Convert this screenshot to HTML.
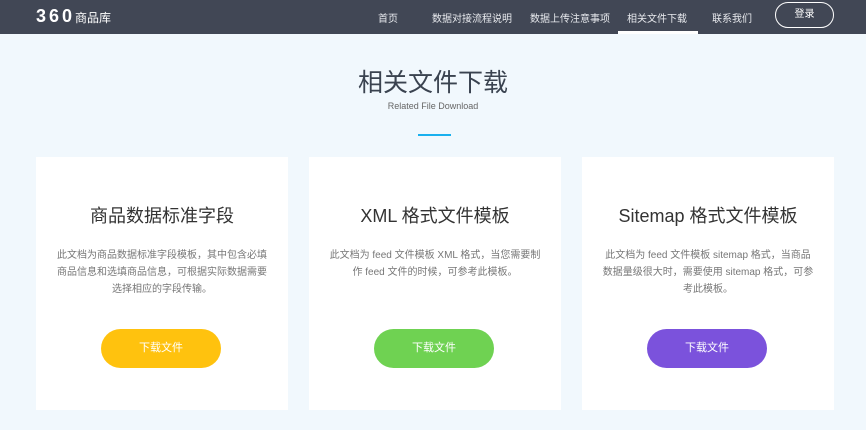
<!DOCTYPE html>
<html><head><meta charset="utf-8"><style>
*{margin:0;padding:0;box-sizing:border-box}
body{width:866px;height:430px;overflow:hidden;background:#f1f8fd;font-family:"Liberation Sans","Noto Sans CJK SC",sans-serif;position:relative}
.hd{position:absolute;left:0;top:0;width:866px;height:34px;background:#414755;color:#fff}
.logo{position:absolute;left:36px;top:6px;font-size:18px;font-weight:bold;letter-spacing:3px}
.logo span{font-size:12px;font-weight:normal;letter-spacing:0}
.nav a{position:absolute;top:10px;font-size:10px;color:#e8eaee;white-space:nowrap}
.ul{position:absolute;left:618px;top:31px;width:80px;height:3px;background:#fff}
.login{position:absolute;left:775px;top:2px;width:59px;height:26px;border:1px solid #fff;border-radius:13px;font-size:10px;color:#fff;text-align:center;line-height:24px}
h1{position:absolute;left:0;width:866px;top:63px;text-align:center;font-size:25px;font-weight:normal;color:#3a4350}
.sub{position:absolute;left:0;width:866px;top:101px;text-align:center;font-size:9px;color:#666}
.bar{position:absolute;left:418px;top:134px;width:33px;height:2px;background:#1ab0ee}
.card{position:absolute;top:157px;width:252px;height:253px;background:#fff;text-align:center}
.card h2{position:absolute;top:45px;left:0;width:100%;font-size:18px;font-weight:normal;color:#333}
.card p{position:absolute;top:90px;left:20px;width:212px;font-size:10px;line-height:17px;color:#777}
.btn{position:absolute;top:172px;left:65px;width:120px;height:39px;border-radius:20px;color:#fff;font-size:11px;line-height:39px}
</style></head><body>
<div class="hd">
<div class="logo">360<span>商品库</span></div>
<div class="nav">
<a style="left:378px">首页</a>
<a style="left:432px">数据对接流程说明</a>
<a style="left:530px">数据上传注意事项</a>
<a style="left:627px">相关文件下载</a>
<a style="left:712px">联系我们</a>
</div>
<div class="ul"></div>
<div class="login">登录</div>
</div>
<h1>相关文件下载</h1>
<div class="sub">Related File Download</div>
<div class="bar"></div>
<div class="card" style="left:36px"><h2>商品数据标准字段</h2><p>此文档为商品数据标准字段模板，其中包含必填商品信息和选填商品信息，可根据实际数据需要选择相应的字段传输。</p><div class="btn" style="background:#ffc20e">下载文件</div></div>
<div class="card" style="left:309px"><h2>XML 格式文件模板</h2><p>此文档为 feed 文件模板 XML 格式，当您需要制作 feed 文件的时候，可参考此模板。</p><div class="btn" style="background:#6fd252">下载文件</div></div>
<div class="card" style="left:582px"><h2>Sitemap 格式文件模板</h2><p>此文档为 feed 文件模板 sitemap 格式，当商品数据量级很大时，需要使用 sitemap 格式，可参考此模板。</p><div class="btn" style="background:#7b52dc">下载文件</div></div>
</body></html>
